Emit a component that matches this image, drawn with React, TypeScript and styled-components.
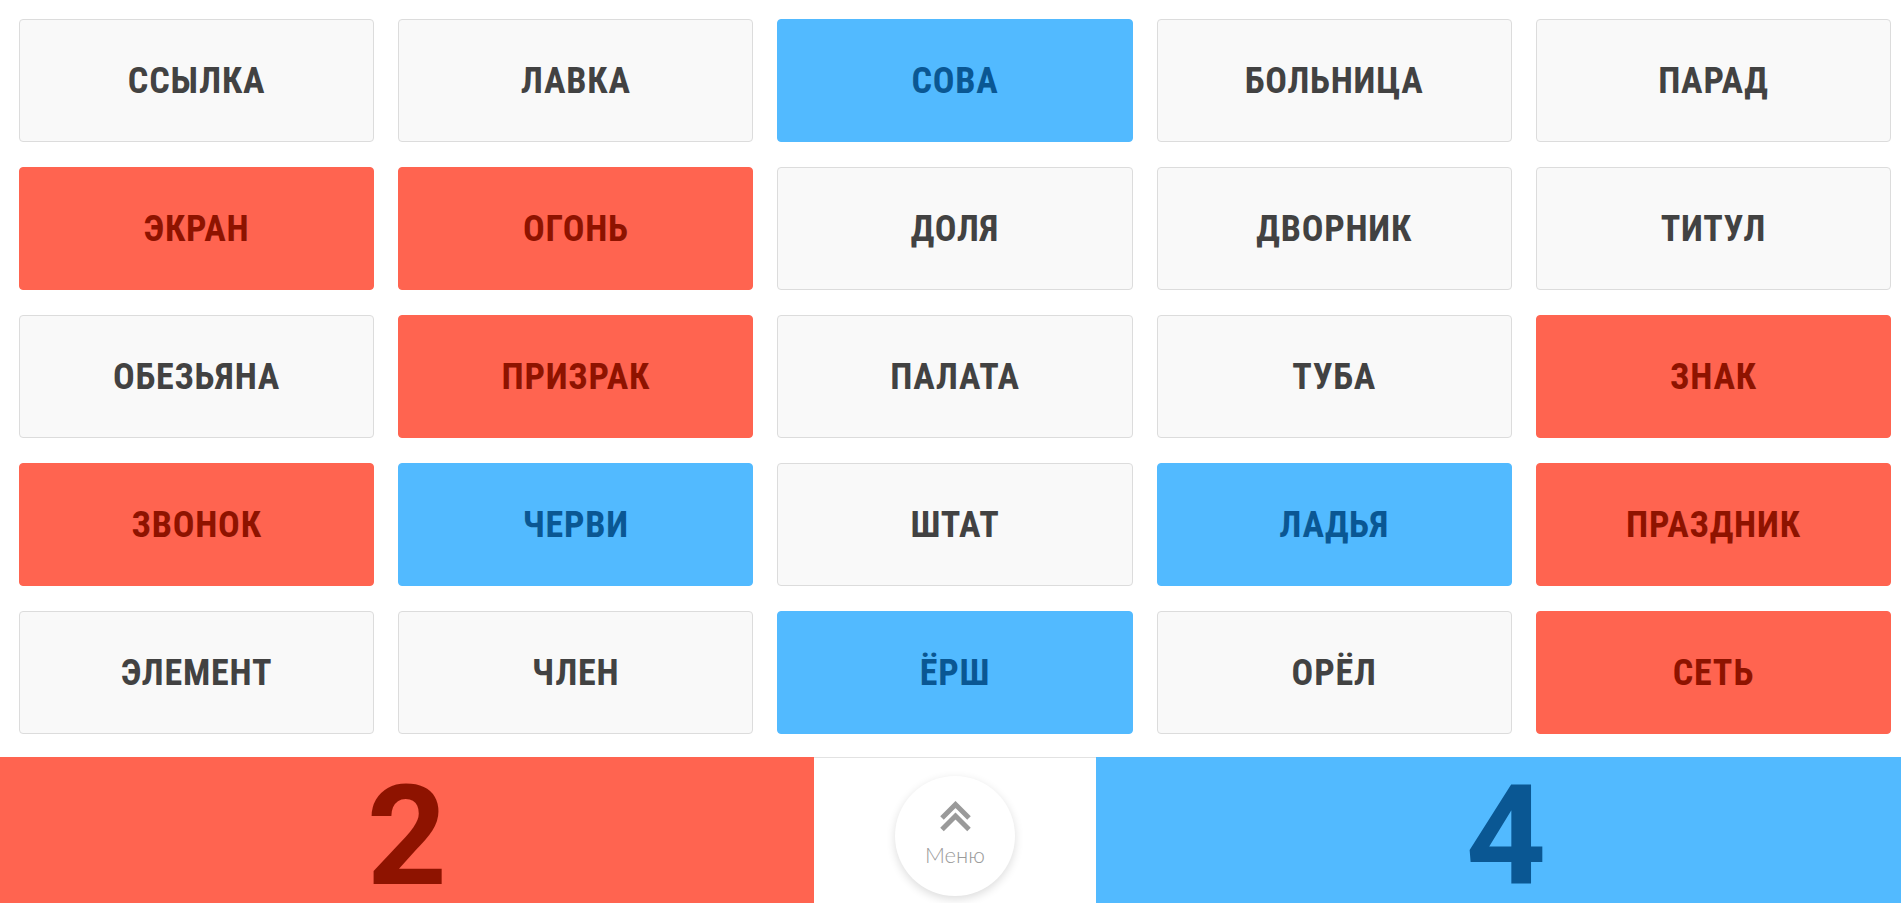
import React from "react";
import styled, { createGlobalStyle, css } from "styled-components";

type Team = "red" | "blue" | "none";

const GlobalStyle = createGlobalStyle`
  html, body {
    margin: 0;
    padding: 0;
    background: #fff;
    font-family: Roboto, "Liberation Sans", sans-serif;
  }
`;

const Page = styled.div`
  width: 100%;
  height: 903px;
  overflow: hidden;
  display: flex;
  flex-direction: column;
`;

const Board = styled.div`
  display: grid;
  grid-template-columns: repeat(5, 1fr);
  grid-auto-rows: 123px;
  gap: 25px 24px;
  padding: 19px 10px 23px 19px;
`;

const teamColors = {
  red: css`
    background: #ff6450;
    border-color: #ff6450;
    color: #8e1300;
  `,
  blue: css`
    background: #52baff;
    border-color: #52baff;
    color: #0a5793;
  `,
  none: css`
    background: #f9f9f9;
    border-color: #dcdcdc;
    color: #424242;
  `,
};

const Card = styled.div<{ $team: Team }>`
  box-sizing: border-box;
  display: flex;
  align-items: center;
  justify-content: center;
  border: 1px solid;
  border-radius: 4px;
  font-family: "Roboto Condensed", Roboto, sans-serif;
  font-stretch: 88%;
  font-weight: 700;
  font-size: 36px;
  letter-spacing: 0.8px;
  text-transform: uppercase;
  ${(p) => teamColors[p.$team]}
`;

const Footer = styled.div`
  display: grid;
  grid-template-columns: 814px 282px 1fr;
  height: 146px;
`;

const Score = styled.div<{ $team: "red" | "blue" }>`
  box-sizing: border-box;
  height: 146px;
  overflow: hidden;
  padding-top: 13px;
  text-align: center;
  font-family: Roboto, sans-serif;
  font-weight: 700;
  font-size: 140px;
  line-height: 133px;
  ${(p) =>
    p.$team === "red"
      ? css`
          background: #ff6450;
          color: #8e1300;
        `
      : css`
          background: #52baff;
          color: #0a5793;
          padding-left: 15px;
        `}
`;

const Middle = styled.div`
  display: flex;
  justify-content: center;
  padding-top: 18px;
  border-top: 1px solid #e2e2e2;
  background: #fff;
`;

const MenuButton = styled.button`
  width: 120px;
  height: 120px;
  border-radius: 50%;
  border: none;
  background: #fff;
  box-shadow: 0 3px 10px rgba(0, 0, 0, 0.14);
  display: flex;
  flex-direction: column;
  align-items: center;
  padding: 25px 0 0;
  gap: 10px;
  cursor: pointer;
`;

const MenuLabel = styled.span`
  font-family: Lato, "Open Sans", sans-serif;
  font-weight: 300;
  font-size: 22px;
  line-height: 26px;
  color: #9a9a9a;
`;

const words: [string, Team][] = [
  ["Ссылка", "none"],
  ["Лавка", "none"],
  ["Сова", "blue"],
  ["Больница", "none"],
  ["Парад", "none"],
  ["Экран", "red"],
  ["Огонь", "red"],
  ["Доля", "none"],
  ["Дворник", "none"],
  ["Титул", "none"],
  ["Обезьяна", "none"],
  ["Призрак", "red"],
  ["Палата", "none"],
  ["Туба", "none"],
  ["Знак", "red"],
  ["Звонок", "red"],
  ["Черви", "blue"],
  ["Штат", "none"],
  ["Ладья", "blue"],
  ["Праздник", "red"],
  ["Элемент", "none"],
  ["Член", "none"],
  ["Ёрш", "blue"],
  ["Орёл", "none"],
  ["Сеть", "red"],
];

const ChevronsUp = () => (
  <svg width="33" height="31" viewBox="0 0 33 31" fill="none" stroke="#9a9a9a" strokeWidth="5">
    <polyline points="3,17 16.5,3.5 30,17" />
    <polyline points="3,28.5 16.5,15 30,28.5" />
  </svg>
);

const App = () => {
  return (
    <Page>
      <GlobalStyle />
      <Board>
        {words.map(([word, team]) => (
          <Card key={word} $team={team}>
            {word}
          </Card>
        ))}
      </Board>
      <Footer>
        <Score $team="red">2</Score>
        <Middle>
          <MenuButton>
            <ChevronsUp />
            <MenuLabel>Меню</MenuLabel>
          </MenuButton>
        </Middle>
        <Score $team="blue">4</Score>
      </Footer>
    </Page>
  );
};

export default App;
